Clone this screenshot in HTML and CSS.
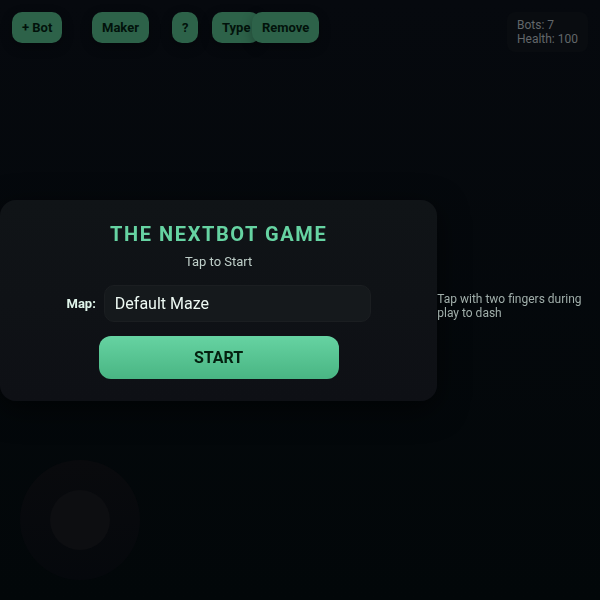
FILE: index.html
```
<!DOCTYPE html>
<html lang="en">
<head>
    <meta charset="UTF-8">
    <meta name="viewport" content="width=device-width, initial-scale=1">
    <title>The Nextbot Game</title>
    <link rel="stylesheet" href="styles.css">
</head>
<body>
    <header class="topbar">
        <div class="tools">
            <button class="tool" type="button">+ Bot</button>
            <button class="tool" type="button">Maker</button>
            <button class="tool" type="button">?</button>
            <button class="tool" type="button">Type</button>
            <button class="tool" type="button">Remove</button>
        </div>
        <div class="hud">
            <div>Bots: 7</div>
            <div>Health: 100</div>
        </div>
    </header>

    <!-- touch joystick -->
    <div class="joystick">
        <div class="knob"></div>
    </div>

    <!-- start menu -->
    <main class="menu">
        <div class="card">
            <h1 class="title">THE NEXTBOT GAME</h1>
            <div class="subtitle">Tap to Start</div>
            <div class="map-row">
                <label class="map-label" for="mapSelect">Map:</label>
                <select class="map-select" id="mapSelect">
                    <option>Default Maze</option>
                </select>
            </div>
            <button class="start" type="button">START</button>
        </div>
        <div class="hint">Tap with two fingers during play to dash</div>
    </main>
</body>
</html>
```
FILE: styles.css
```
* {
    box-sizing: border-box;
}
html, body {
    height: 100%;
    margin: 0;
}
body {
    font-family: Roboto, "Liberation Sans", sans-serif;
    background: linear-gradient(#06090e, #020709);
    color: #dff5ea;
    overflow: hidden;
}
button, select {
    font-family: inherit;
}
.topbar {
    display: flex;
    justify-content: space-between;
    align-items: flex-start;
    padding: 12px;
}
/* fixed slots, long labels run over into the next one */
.tools {
    display: grid;
    grid-template-columns: 80px 80px 40px 40px auto;
    justify-items: start;
}
.tool {
    padding: 8px 10px;
    border: none;
    border-radius: 10px;
    background: #2d6249;
    color: #02120b;
    font-size: 13px;
    font-weight: bold;
    line-height: 15px;
    white-space: nowrap;
    box-shadow: 0 4px 12px rgba(0, 0, 0, 0.3);
}
.hud {
    padding: 6px 10px;
    border-radius: 8px;
    background: #090c10;
    color: #62676a;
    font-size: 12px;
    line-height: 14px;
}
.joystick {
    position: fixed;
    left: 20px;
    bottom: 20px;
    width: 120px;
    height: 120px;
    display: flex;
    justify-content: center;
    align-items: center;
    border-radius: 50%;
    background: linear-gradient(#090a0d, #05080c);
}
.knob {
    width: 60px;
    height: 60px;
    border-radius: 50%;
    background: #0d0e11;
}
.menu {
    position: fixed;
    inset: 0;
    display: flex;
    align-items: center;
}
.card {
    width: 92%;
    max-width: 720px;
    padding: 22px 28px;
    border-radius: 16px;
    background: linear-gradient(#101417, #0e1015);
    text-align: center;
    box-shadow: 0 8px 30px rgba(0, 0, 0, 0.6);
}
.title {
    margin: 0 0 8px;
    color: #66d3a2;
    font-size: 20px;
    line-height: 24px;
    letter-spacing: 0.08em;
}
.subtitle {
    color: #bfcfc9;
    font-size: 13px;
    line-height: 15px;
}
.map-row {
    display: flex;
    justify-content: center;
    align-items: center;
    gap: 8px;
    margin: 16px 0 14px;
}
.map-label {
    font-size: 13px;
    font-weight: bold;
}
.map-select {
    appearance: none;
    width: 70%;
    padding: 8px 10px;
    border: 1px solid #1b1e21;
    border-radius: 10px;
    background: #15191c;
    color: #eefaf4;
    font-size: 16px;
    line-height: 19px;
}
.start {
    display: block;
    width: 240px;
    max-width: 100%;
    margin: 0 auto;
    padding: 12px;
    border: none;
    border-radius: 12px;
    background: linear-gradient(#66d3a2, #49b583);
    color: #04200f;
    font-size: 16px;
    font-weight: bold;
    line-height: 19px;
}
.hint {
    margin-top: 12px;
    color: #a0aeaa;
    font-size: 12px;
    line-height: 14px;
}
```
